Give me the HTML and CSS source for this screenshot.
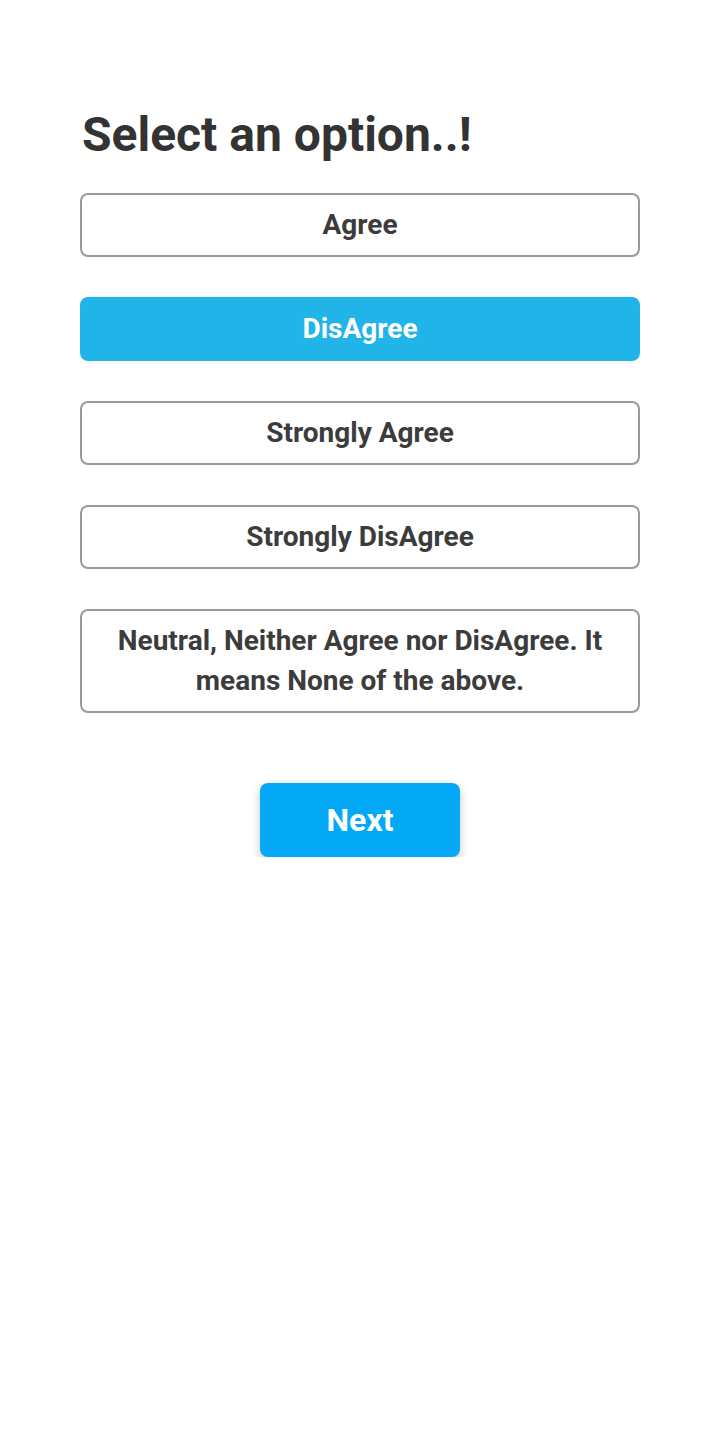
FILE: index.html
```html
<!DOCTYPE html>
<html>
<head>
<meta charset="utf-8">
<link rel="stylesheet" href="styles.css">
</head>
<body>
<main class="page">
  <h1 class="title">Select an option..!</h1>
  <div class="options">
    <button class="option">Agree</button>
    <button class="option selected">DisAgree</button>
    <button class="option">Strongly Agree</button>
    <button class="option">Strongly DisAgree</button>
    <button class="option">Neutral, Neither Agree nor DisAgree. It means None of the above.</button>
  </div>
  <div class="actions">
    <button class="next">Next</button>
  </div>
</main>
</body>
</html>
```
FILE: styles.css
```css
html, body {
  margin: 0;
  padding: 0;
  background: #fff;
  font-family: Roboto, "Liberation Sans", sans-serif;
}
.page {
  width: 560px;
  padding: 105px 80px 0;
}
.title {
  margin: 0 0 28px;
  font-size: 48px;
  font-weight: 700;
  line-height: 60px;
  color: #333333;
  padding-left: 2px;
}
.options {
  display: flex;
  flex-direction: column;
  gap: 40px;
}
.option {
  display: block;
  width: 100%;
  box-sizing: border-box;
  border: 2px solid #9a9a9a;
  border-radius: 8px;
  background: #fff;
  padding: 10px 30px;
  font-family: inherit;
  font-size: 28px;
  font-weight: 700;
  line-height: 40px;
  color: #3c3c3c;
  text-align: center;
}
.option.selected {
  background: #21b4e8;
  border-color: #21b4e8;
  color: #fff;
}
.actions {
  display: flex;
  justify-content: center;
  margin-top: 70px;
}
.next {
  width: 200px;
  height: 74px;
  border: none;
  border-radius: 8px;
  background: #03a9f4;
  color: #fff;
  font-family: inherit;
  font-size: 32px;
  font-weight: 700;
  box-shadow: 0 4px 10px rgba(0, 0, 0, 0.22);
}
```
